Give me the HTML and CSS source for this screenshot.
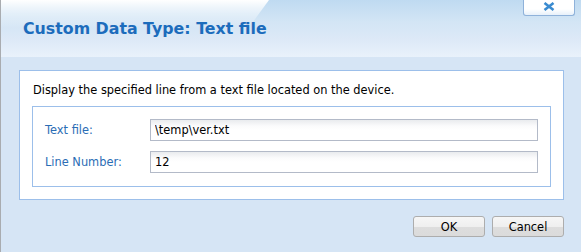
FILE: index.html
```html
<!DOCTYPE html>
<html>
<head>
<meta charset="utf-8">
<link rel="stylesheet" href="styles.css">
</head>
<body>
<div class="dialog">
  <header class="titlebar">
    <h1 class="title">Custom Data Type: Text file</h1>
    <button class="close" type="button" aria-label="Close">
      <svg width="12" height="9" viewBox="0 0 12 9"><path d="M1.5 1 L10.5 8 M10.5 1 L1.5 8" stroke="#3a8bd0" stroke-width="2.6" fill="none"/></svg>
    </button>
  </header>
  <main class="content">
    <section class="panel">
      <p class="desc">Display the specified line from a text file located on the device.</p>
      <div class="fields">
        <div class="row">
          <label class="label">Text file:</label>
          <input class="input" type="text" value="\temp\ver.txt">
        </div>
        <div class="row">
          <label class="label">Line Number:</label>
          <input class="input" type="text" value="12">
        </div>
      </div>
    </section>
    <div class="actions">
      <button class="btn" type="button">OK</button>
      <button class="btn" type="button">Cancel</button>
    </div>
  </main>
</div>
</body>
</html>
```
FILE: styles.css
```css
* { box-sizing: border-box; }
html, body { margin: 0; padding: 0; }
body {
  width: 581px;
  height: 252px;
  overflow: hidden;
  font-family: "DejaVu Sans", sans-serif;
  font-size: 11.4px;
  background: #d6e5f5;
}
.dialog {
  height: 252px;
  border-left: 1px solid #a9acb0;
  background: #d6e5f5;
  display: flex;
  flex-direction: column;
}
.titlebar {
  position: relative;
  height: 57px;
  display: flex;
  align-items: flex-start;
  background: linear-gradient(to bottom, #bfdaf1 0, #d3e5f5 22px, #dde9f7 40px, #e9f2fb 57px);
}
.titlebar::before {
  content: "";
  position: absolute;
  left: 0; top: 0;
  width: 270px; height: 30px;
  background: linear-gradient(to bottom, rgba(255,255,255,1) 0, rgba(255,255,255,0.45) 14px, rgba(255,255,255,0) 28px);
  clip-path: polygon(0 0, 268px 0, 246px 30px, 0 30px);
}
.title {
  position: relative;
  margin: 20px 0 0 22px;
  font-size: 15.8px;
  font-weight: bold;
  color: #1c6cbc;
  line-height: 17px;
}
.close {
  margin-left: auto;
  margin-right: 6px;
  width: 52px;
  height: 16px;
  padding: 0;
  border: 1px solid #8fb2da;
  border-top: none;
  border-radius: 0 0 3px 3px;
  background: linear-gradient(to bottom, #ffffff 0, #ffffff 9px, #e3eef9 16px);
  display: flex;
  align-items: center;
  justify-content: center;
}
.close svg { display: block; margin-top: -2px; }
.content {
  padding: 13px 17px 0 18px;
}
.panel {
  border: 1px solid #9cbfea;
  background: #fff;
  padding: 12px 12px 12px 12px;
}
.desc {
  margin: 0 0 8px 1px;
  line-height: 15px;
  color: #000;
}
.fields {
  border: 1px solid #9cbfea;
  padding: 12px 11px 13px 12px;
  display: flex;
  flex-direction: column;
  gap: 10px;
}
.row {
  display: flex;
  align-items: center;
}
.label {
  width: 105px;
  color: #2b6db5;
}
.input {
  width: 388px;
  height: 22px;
  border: 1px solid #b3bac8;
  padding: 0 4px;
  font: inherit;
  color: #000;
  background: linear-gradient(to bottom, #e9ebee 0, #fbfbfc 6px, #ffffff 10px);
  outline: none;
}
.actions {
  margin-top: 16px;
  display: flex;
  justify-content: flex-end;
  gap: 7px;
}
.btn {
  width: 72px;
  height: 21px;
  padding: 0;
  font: inherit;
  color: #000;
  border: 1px solid #adadad;
  border-radius: 3px;
  background: linear-gradient(to bottom, #f6f6f6 0, #efefef 50%, #dddddd 50%, #dbdbdb 100%);
}
```
